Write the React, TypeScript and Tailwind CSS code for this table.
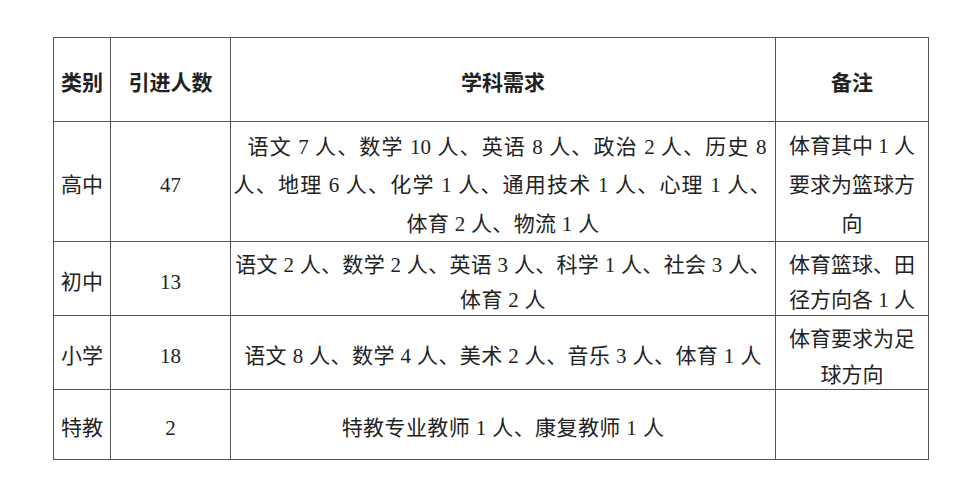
import type { ReactNode } from "react";

function Cell({ h, className = "", children, style }: { h: string; className?: string; children?: ReactNode; style?: React.CSSProperties }) {
  return (
    <td className="border border-[#555] p-0 align-middle">
      <div
        className={`${h} flex flex-col items-center justify-center pt-[8px] text-center text-[21px] leading-[37px] text-[#222] whitespace-nowrap overflow-visible ${className}`}
        style={style}
      >
        {children}
      </div>
    </td>
  );
}

export default function App() {
  const font = { fontFamily: '"Liberation Serif", "Noto Sans CJK SC", serif' };
  const hfont = { fontFamily: '"Liberation Serif", "Noto Sans CJK SC", sans-serif' };
  const just = "block [text-align:justify] [text-align-last:justify]";
  const H0 = "h-[83px]";
  const H1 = "h-[119px]";
  const H2 = "h-[73px]";
  const H4 = "h-[69px]";
  return (
    <div className="w-[973px] h-[504px] bg-white pt-[37px] pl-[53px]" style={font}>
      <table className="border-collapse table-fixed w-[875px]">
        <colgroup>
          <col className="w-[57px]" />
          <col className="w-[120px]" />
          <col className="w-[545px]" />
          <col className="w-[153px]" />
        </colgroup>
        <tbody>
          <tr>
            <Cell h={H0} className="font-bold" style={hfont}>类别</Cell>
            <Cell h={H0} className="font-bold" style={hfont}>引进人数</Cell>
            <Cell h={H0} className="font-bold" style={hfont}>学科需求</Cell>
            <Cell h={H0} className="font-bold" style={hfont}>备注</Cell>
          </tr>
          <tr>
            <Cell h={H1}>高中</Cell>
            <Cell h={H1}>47</Cell>
            <Cell h={H1} className="!leading-[38.5px]">
              <span className={`${just} w-[519px] ml-[8px]`}>语文 7 人、数学 10 人、英语 8 人、政治 2 人、历史 8</span>
              <span className={`${just} w-[537px] ml-[-2px]`}>人、地理 6 人、化学 1 人、通用技术 1 人、心理 1 人、</span>
              <span className="block tracking-[0.3px]">体育 2 人、物流 1 人</span>
            </Cell>
            <Cell h={H1} className="!leading-[39px]">
              <span>体育其中 1 人</span>
              <span>要求为篮球方</span>
              <span>向</span>
            </Cell>
          </tr>
          <tr>
            <Cell h={H2} className="!leading-[35px] tracking-[0.3px]">
              初中
            </Cell>
            <Cell h={H2}>13</Cell>
            <Cell h={H2} className="!leading-[35px] tracking-[0.3px]">
              <span>语文 2 人、数学 2 人、英语 3 人、科学 1 人、社会 3 人、</span>
              <span>体育 2 人</span>
            </Cell>
            <Cell h={H2} className="!leading-[35px]">
              <span>体育篮球、田</span>
              <span>径方向各 1 人</span>
            </Cell>
          </tr>
          <tr>
            <Cell h={H2}>小学</Cell>
            <Cell h={H2}>18</Cell>
            <Cell h={H2} className="tracking-[0.4px]">
              语文 8 人、数学 4 人、美术 2 人、音乐 3 人、体育 1 人
            </Cell>
            <Cell h={H2} className="!leading-[36px]">
              <span>体育要求为足</span>
              <span>球方向</span>
            </Cell>
          </tr>
          <tr>
            <Cell h={H4}>特教</Cell>
            <Cell h={H4}>2</Cell>
            <Cell h={H4} className="tracking-[0.4px]">特教专业教师 1 人、康复教师 1 人</Cell>
            <Cell h={H4}></Cell>
          </tr>
        </tbody>
      </table>
    </div>
  );
}
